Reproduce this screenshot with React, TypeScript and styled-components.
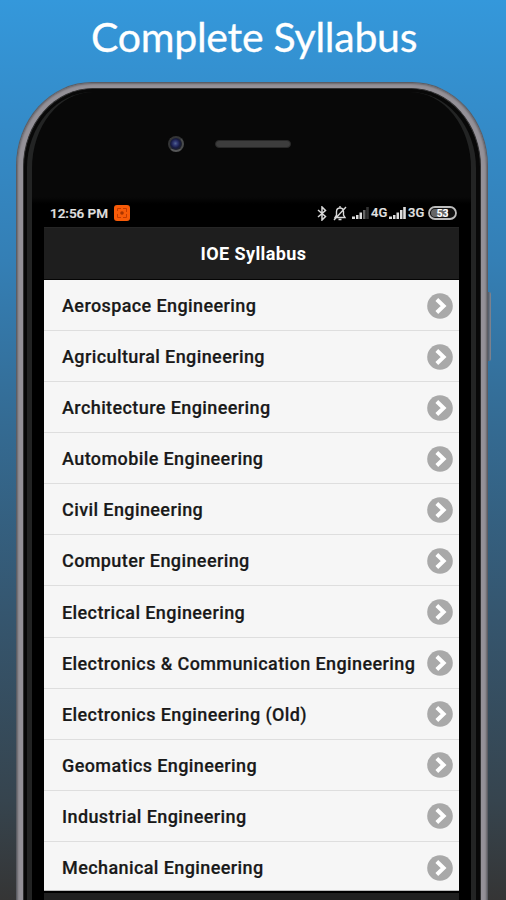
import React from "react";
import styled, { createGlobalStyle } from "styled-components";

const GlobalStyle = createGlobalStyle`
  * { box-sizing: border-box; }
  body { margin: 0; overflow: hidden; }
`;

const Page = styled.main`
  width: 506px;
  height: 900px;
  overflow: hidden;
  display: flex;
  flex-direction: column;
  background: linear-gradient(#3498db 0%, #348bc8 14%, #347fb5 29%, #346b93 47%, #35566f 68%, #36444e 89%, #353535 100%);
`;

const Heading = styled.h1`
  margin: 0;
  height: 82px;
  flex: none;
  padding: 12px 0 0 91px;
  font: 400 41px/50px Lato, sans-serif;
  letter-spacing: -0.25px;
  white-space: nowrap;
  color: #fff;
  -webkit-text-stroke: 0.3px #fff;
`;

const Phone = styled.div`
  position: relative;
  flex: none;
  width: 472px;
  height: 900px;
  margin-left: 16px;
  padding: 5px 6px;
  border: 1px solid #5b5d64;
  border-bottom: 0;
  border-radius: 76px 76px 0 0 / 84px 84px 0 0;
  background: #949198;
  box-shadow: inset 0 0 2px 1px #68666b;
`;

const SideButton = styled.span`
  position: absolute;
  left: 471px;
  top: 209px;
  width: 3px;
  height: 69px;
  border-radius: 0 2px 2px 0;
  background: linear-gradient(90deg, #4d5967, #858995);
`;

const Bezel = styled.div`
  height: 894px;
  padding: 3px 4px 0 3px;
  border: 1px solid #303031;
  border-bottom: 0;
  border-radius: 70px 70px 0 0 / 79px 79px 0 0;
  background: #080808;
`;

const Rim = styled.div`
  height: 890px;
  border: solid;
  border-width: 0 5px;
  border-color: #232424;
  border-radius: 66px 66px 0 0 / 76px 76px 0 0;
  background: linear-gradient(#080808 105px, #000 112px);
  padding: 44px 12px 0;
`;

const Sensors = styled.div`
  height: 63px;
  display: flex;
  align-items: flex-start;
  padding-left: 124px;
`;

const Camera = styled.span`
  width: 16px;
  height: 16px;
  border-radius: 50%;
  border: 2px solid #343536;
  border-right-color: #494b4c;
  border-bottom-color: #565758;
  background: radial-gradient(circle at 45% 45%, #53658f 0, #303874 22%, #171b41 48%, #202225 75%);
`;

const Speaker = styled.span`
  width: 76px;
  height: 8px;
  margin: 4px 0 0 31px;
  border-radius: 4px;
  border: 1px solid #282828;
  background: #3d3d3d;
`;

const Screen = styled.section`
  width: 415px;
  font-family: Roboto, sans-serif;
`;

const StatusBar = styled.div`
  height: 28px;
  display: flex;
  align-items: center;
  padding: 0 2px 0 6px;
  color: #e2e2e2;
  font-size: 13px;
  font-weight: 500;
  line-height: 16px;
  white-space: nowrap;
`;

const Clock = styled.span`
  width: 64px;
  font-size: 13.5px;
  -webkit-text-stroke: 0.2px #e2e2e2;
`;

const StatusIcon = styled.svg<{ $gap?: number }>`
  flex: none;
  margin-left: ${({ $gap = 0 }) => $gap}px;
`;

const Spacer = styled.span`
  flex: 1;
`;

const Network = styled.span`
  width: 18px;
  margin-left: 2px;
  font-size: 13px;
  -webkit-text-stroke: 0.2px #e2e2e2;
`;

const AppBar = styled.header`
  height: 53px;
  border-top: 1px solid #252525;
  border-bottom: 1px solid #050505;
  background: #1e1e1e;
  color: #fff;
  font-size: 18px;
  font-weight: 700;
  letter-spacing: 0.4px;
  line-height: 51px;
  text-align: center;
  padding-left: 4px;
`;

const List = styled.ul`
  margin: 0;
  padding: 0;
  list-style: none;
  height: 611px;
  border-bottom: 1px solid #bbb;
  background: #f6f6f6;
  overflow: hidden;
`;

const Row = styled.li`
  height: 51.08px;
  display: flex;
  align-items: center;
  justify-content: space-between;
  padding: 1px 6px 0 18px;
  border-bottom: 1px solid #dedede;
  color: #191919;
  font-size: 18px;
  font-weight: 500;
  letter-spacing: 0.4px;
  -webkit-text-stroke: 0.2px #191919;
  white-space: nowrap;
  &:last-child { border-bottom: 0; }
`;

const BottomBar = styled.div`
  height: 20px;
  border-top: 2px solid #000;
  background: #202020;
`;

const courses = [
  "Aerospace Engineering",
  "Agricultural Engineering",
  "Architecture Engineering",
  "Automobile Engineering",
  "Civil Engineering",
  "Computer Engineering",
  "Electrical Engineering",
  "Electronics & Communication Engineering",
  "Electronics Engineering (Old)",
  "Geomatics Engineering",
  "Industrial Engineering",
  "Mechanical Engineering",
];

function Arrow() {
  return (
    <svg width="26" height="26" viewBox="0 0 26 26">
      <circle cx="13" cy="13" r="12.8" fill="#a9a9a9" />
      <path d="M9.8 6.5 16.6 13l-6.8 6.5" fill="none" stroke="#fff" strokeWidth="4" />
    </svg>
  );
}

function Signal({ weak = false }: { weak?: boolean }) {
  return (
    <StatusIcon width="17" height="12" viewBox="0 0 17 12" $gap={weak ? 5 : 0}>
      <path d="M0 9.5h3V12H0zM4 8h2.5v4H4zM7.5 5.5H10V12H7.5z" fill="#ddd" />
      <path d="M11 3h2.5v9H11z" fill={weak ? "#666" : "#ddd"} />
      <path d="M14.2 0h2.6v12h-2.6z" fill={weak ? "#333" : "#ddd"} />
    </StatusIcon>
  );
}

export default function App() {
  return (
    <>
      <GlobalStyle />
      <Page>
        <Heading>Complete Syllabus</Heading>
        <Phone>
          <SideButton />
          <Bezel>
            <Rim>
              <Sensors>
                <Camera />
                <Speaker />
              </Sensors>
              <Screen>
                <StatusBar>
                  <Clock>12:56 PM</Clock>
                  <StatusIcon width="16" height="16" viewBox="0 0 16 16">
                    <rect width="16" height="16" rx="3" fill="#f75b08" />
                    <path d="M3.5 6V3.5H7M9 3.5h3.5V7M12.5 9v3.5H9M7 12.5H3.5V9" fill="none" stroke="#c43b00" />
                    <circle cx="8" cy="8" r="1.8" fill="#a83500" />
                  </StatusIcon>
                  <Spacer />
                  <StatusIcon width="10" height="15" viewBox="0 0 10 15" fill="none" stroke="#d8d8d8" strokeWidth="1.5">
                    <path d="m1 4 7.5 6.5L5 14V1l3.5 3.5L1 11" />
                  </StatusIcon>
                  <StatusIcon $gap={6} width="14" height="15" viewBox="0 0 14 15" fill="none" stroke="#d8d8d8" strokeWidth="1.4">
                    <path d="M2 11.5h10L10.5 9V5.5Q10.3 2 7 2T3.5 5.5V9ZM5.5 13.5h3M7 0v2M13 1 1 14" />
                  </StatusIcon>
                  <Signal weak />
                  <Network>4G</Network>
                  <Signal />
                  <Network>3G</Network>
                  <StatusIcon $gap={2} width="29" height="14" viewBox="0 0 29 14">
                    <rect x="1" y="1" width="27" height="12" rx="6" fill="#111" stroke="#bcbcbc" strokeWidth="1.8" />
                    <path d="M7 3h13v8H7a4 4 0 0 1 0-8Z" fill="#666" />
                    <text x="14.5" y="10.8" fill="#fff" fontFamily="Roboto, sans-serif" fontSize="10.5" fontWeight="700" textAnchor="middle">53</text>
                  </StatusIcon>
                </StatusBar>
                <AppBar>IOE Syllabus</AppBar>
                <List>
                  {courses.map((name) => (
                    <Row key={name}>
                      <span>{name}</span>
                      <Arrow />
                    </Row>
                  ))}
                </List>
                <BottomBar />
              </Screen>
            </Rim>
          </Bezel>
        </Phone>
      </Page>
    </>
  );
}
